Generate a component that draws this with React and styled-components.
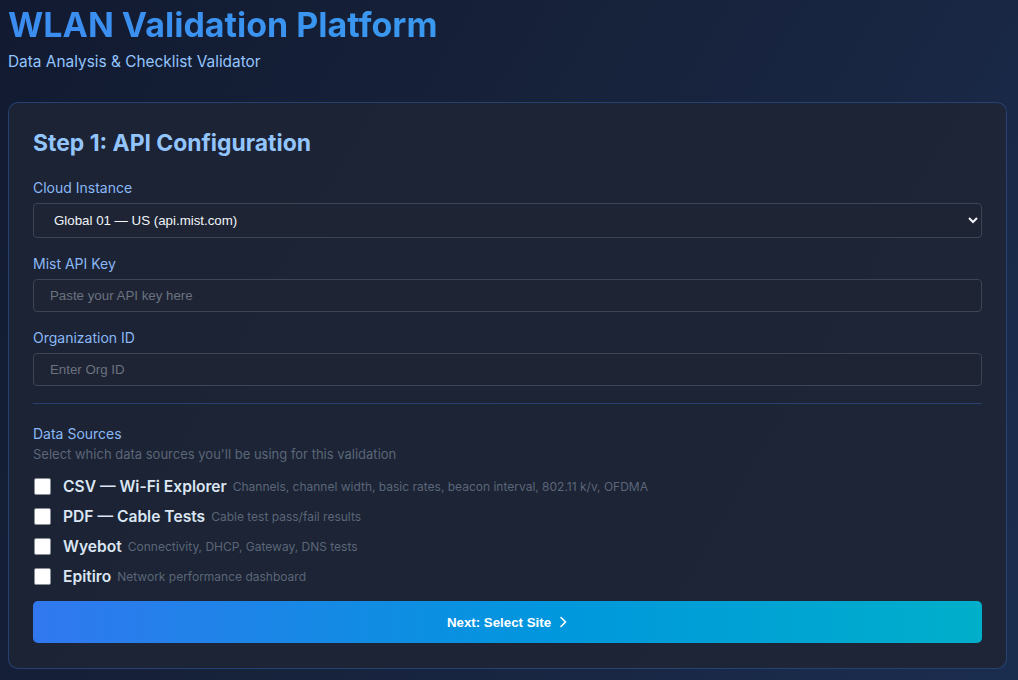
import React, { useState } from 'react';
import styled, { createGlobalStyle } from 'styled-components';

const GlobalStyle = createGlobalStyle`
    html, body {
        margin: 0;
        padding: 0;
        min-height: 100%;
    }
    body {
        background: linear-gradient(120deg, #111a30 0%, #17223b 45%, #1b2d4f 100%);
        background-attachment: fixed;
        min-height: 680px;
        font-family: 'Inter', 'Liberation Sans', sans-serif;
        color: #e2e8f0;
    }
`;

const Page = styled.div`
    padding: 0 11px 12px 8px;
`;

const Header = styled.header`
    padding: 4px 0 31px;
`;

const Title = styled.h1`
    margin: 0;
    font-size: 34px;
    line-height: 42px;
    font-weight: 700;
    background: linear-gradient(90deg, #3b8cf0, #38a9ee);
    -webkit-background-clip: text;
    background-clip: text;
    color: transparent;
`;

const Subtitle = styled.p`
    margin: 6px 0 0;
    font-size: 15.4px;
    line-height: 19px;
    color: #93c5fd;
`;

const Card = styled.section`
    background: rgba(30, 36, 52, 0.88);
    border: 1px solid rgba(59, 130, 246, 0.32);
    border-radius: 10px;
    padding: 24px 24px 25px;
`;

const StepTitle = styled.h2`
    margin: 0 0 20px;
    font-size: 22.9px;
    line-height: 32px;
    font-weight: 700;
    color: #93c5fd;
`;

const Field = styled.div`
    display: flex;
    flex-direction: column;
    gap: 7px;
    margin-bottom: 17px;
`;

const Label = styled.label`
    font-size: 14px;
    line-height: 17px;
    color: #8ab8f6;
`;

const Select = styled.select`
    height: 35px;
    padding: 0 12px 0 16px;
    background: #1e2433;
    border: 1px solid #3b4556;
    border-radius: 4px;
    color: #f1f5f9;
    font-family: 'Liberation Sans', Arial, sans-serif;
    font-size: 13.3px;
    color-scheme: dark;
    outline: none;
`;

const Input = styled.input`
    height: 33px;
    padding: 0 16px;
    background: #1e2433;
    border: 1px solid #3b4556;
    border-radius: 4px;
    color: #f1f5f9;
    font-family: 'Liberation Sans', Arial, sans-serif;
    font-size: 13.3px;
    box-sizing: border-box;
    outline: none;
    &::placeholder {
        color: #6b7280;
    }
`;

const Divider = styled.hr`
    border: none;
    border-top: 1px solid rgba(59, 130, 246, 0.3);
    margin: 0 0 21px;
`;

const SectionTitle = styled.div`
    font-size: 14px;
    line-height: 17px;
    color: #8ab8f6;
`;

const Hint = styled.div`
    margin-top: 4px;
    font-size: 13px;
    line-height: 17px;
    color: #5b6678;
`;

const SourceList = styled.div`
    display: flex;
    flex-direction: column;
    gap: 12px;
    margin: 14px 0 16px;
`;

const SourceRow = styled.label`
    display: flex;
    align-items: center;
    gap: 12px;
    height: 18px;
    cursor: pointer;
`;

const Check = styled.input.attrs({ type: 'checkbox' })`
    appearance: none;
    margin: 0 0 0 1px;
    width: 17px;
    height: 17px;
    background: #fff;
    border: 1px solid #8a8f98;
    border-radius: 2px;
    box-sizing: border-box;
    &:checked {
        background: #3b82f6;
    }
`;

const SourceName = styled.span`
    font-size: 15.6px;
    font-weight: 600;
    color: #dbe6f3;
    white-space: nowrap;
`;

const SourceDesc = styled.span`
    margin-left: -6px;
    font-size: 12px;
    color: #5b6678;
    white-space: nowrap;
`;

const NextButton = styled.button`
    width: 100%;
    height: 42px;
    display: flex;
    align-items: center;
    justify-content: center;
    gap: 7px;
    border: none;
    border-radius: 5px;
    background: linear-gradient(90deg, #3178ef 0%, #0097dd 55%, #00afca 100%);
    color: #fff;
    font-family: 'Liberation Sans', Arial, sans-serif;
    font-size: 13.3px;
    font-weight: 700;
    cursor: pointer;
`;

const sources = [
    { name: 'CSV — Wi-Fi Explorer', desc: 'Channels, channel width, basic rates, beacon interval, 802.11 k/v, OFDMA' },
    { name: 'PDF — Cable Tests', desc: 'Cable test pass/fail results' },
    { name: 'Wyebot', desc: 'Connectivity, DHCP, Gateway, DNS tests' },
    { name: 'Epitiro', desc: 'Network performance dashboard' },
];

const Chevron = () => (
    <svg width="10" height="12" viewBox="0 0 10 12" fill="none">
        <path d="M3 1.5 L7.5 6 L3 10.5" stroke="#fff" strokeWidth="1.6" strokeLinecap="round" strokeLinejoin="round" />
    </svg>
);

export default function App() {
    const [checked, setChecked] = useState({});

    const toggle = name => setChecked({ ...checked, [name]: !checked[name] });

    return (
        <Page>
            <GlobalStyle />
            <Header>
                <Title>WLAN Validation Platform</Title>
                <Subtitle>Data Analysis &amp; Checklist Validator</Subtitle>
            </Header>
            <Card>
                <StepTitle>Step 1: API Configuration</StepTitle>
                <Field>
                    <Label>Cloud Instance</Label>
                    <Select defaultValue="global01">
                        <option value="global01">Global 01 — US (api.mist.com)</option>
                        <option value="global02">Global 02 — US (api.gc1.mist.com)</option>
                        <option value="eu01">EMEA 01 — EU (api.eu.mist.com)</option>
                    </Select>
                </Field>
                <Field>
                    <Label>Mist API Key</Label>
                    <Input placeholder="Paste your API key here" />
                </Field>
                <Field>
                    <Label>Organization ID</Label>
                    <Input placeholder="Enter Org ID" />
                </Field>
                <Divider />
                <SectionTitle>Data Sources</SectionTitle>
                <Hint>Select which data sources you'll be using for this validation</Hint>
                <SourceList>
                    {sources.map(s => (
                        <SourceRow key={s.name}>
                            <Check checked={!!checked[s.name]} onChange={() => toggle(s.name)} />
                            <SourceName>{s.name}</SourceName>
                            <SourceDesc>{s.desc}</SourceDesc>
                        </SourceRow>
                    ))}
                </SourceList>
                <NextButton>
                    Next: Select Site <Chevron />
                </NextButton>
            </Card>
        </Page>
    );
}
